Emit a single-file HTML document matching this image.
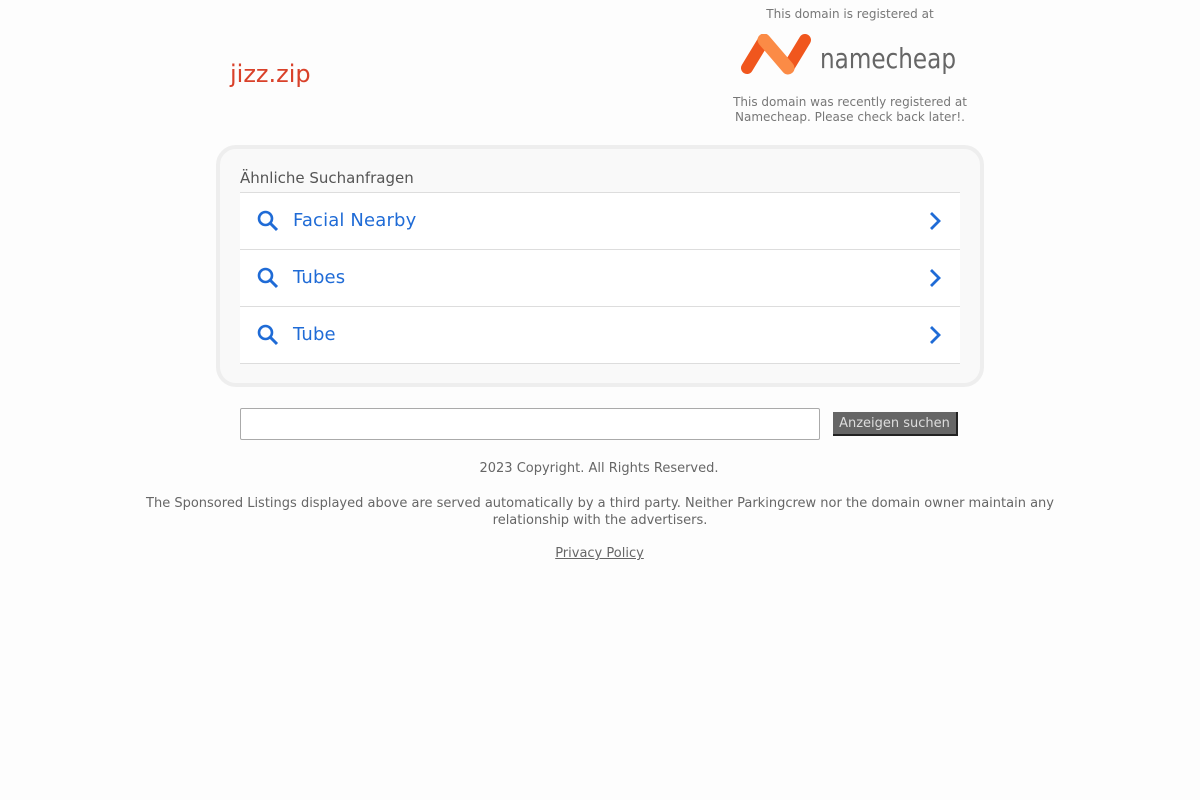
<!DOCTYPE html><html><head><style>
body{margin:0;background:#fdfdfd;font-family:"DejaVu Sans","Liberation Sans",sans-serif;color:#666}
.a{position:absolute}
.row{position:absolute;left:240px;width:720px;height:56px;background:#fff;border-bottom:1px solid #ddd}
.row span{position:absolute;left:53px;top:17px;font-size:18px;color:#1f6bd6;letter-spacing:0.15px}
.row svg.s{position:absolute;left:16px;top:16px}
.row svg.c{position:absolute;left:684px;top:17px}
</style></head><body>
<div class="a" style="left:720px;width:260px;top:7px;text-align:center;font-size:12px;color:#777">This domain is registered at</div>
<div class="a" style="left:230px;top:60px;font-size:24px;color:#d9412a">jizz.zip</div>
<svg class="a" style="left:740px;top:34px" width="220" height="42" viewBox="0 0 220 42">
<path d="M7 34 L24 6" stroke="#f0561d" stroke-width="12" stroke-linecap="round"/>
<path d="M48 34 L65 6" stroke="#f0561d" stroke-width="12" stroke-linecap="round"/>
<path d="M24 6 L48 34" stroke="#fb8b46" stroke-width="13" stroke-linecap="round"/>
<text x="80" y="34" font-family="DejaVu Sans,sans-serif" font-size="28" fill="#666" textLength="136" lengthAdjust="spacingAndGlyphs">namecheap</text>
</svg>
<div class="a" style="left:720px;width:260px;top:95px;text-align:center;font-size:12px;line-height:15px;color:#777">This domain was recently registered at Namecheap. Please check back later!.</div>
<div class="a" style="left:216px;top:145px;width:760px;height:234px;border:4px solid #eee;border-radius:20px;background:#f9f9f9"></div>
<div class="a" style="left:240px;top:169px;font-size:15px;color:#555">Ähnliche Suchanfragen</div>
<div class="a" style="left:240px;top:192px;width:720px;border-top:1px solid #ddd"></div>
<div class="row" style="top:193px"><svg class="s" width="24" height="24" viewBox="0 0 24 24"><circle cx="9.5" cy="9.5" r="6.5" fill="none" stroke="#1f6bd6" stroke-width="2.6"/><path d="M14.5 14.5 L21 21" stroke="#1f6bd6" stroke-width="3"/></svg><span>Facial Nearby</span><svg class="c" width="22" height="22" viewBox="0 0 22 22"><path d="M7 3 L15 11 L7 19" fill="none" stroke="#1f6bd6" stroke-width="2.8"/></svg></div>
<div class="row" style="top:250px"><svg class="s" width="24" height="24" viewBox="0 0 24 24"><circle cx="9.5" cy="9.5" r="6.5" fill="none" stroke="#1f6bd6" stroke-width="2.6"/><path d="M14.5 14.5 L21 21" stroke="#1f6bd6" stroke-width="3"/></svg><span>Tubes</span><svg class="c" width="22" height="22" viewBox="0 0 22 22"><path d="M7 3 L15 11 L7 19" fill="none" stroke="#1f6bd6" stroke-width="2.8"/></svg></div>
<div class="row" style="top:307px"><svg class="s" width="24" height="24" viewBox="0 0 24 24"><circle cx="9.5" cy="9.5" r="6.5" fill="none" stroke="#1f6bd6" stroke-width="2.6"/><path d="M14.5 14.5 L21 21" stroke="#1f6bd6" stroke-width="3"/></svg><span>Tube</span><svg class="c" width="22" height="22" viewBox="0 0 22 22"><path d="M7 3 L15 11 L7 19" fill="none" stroke="#1f6bd6" stroke-width="2.8"/></svg></div>
<div class="a" style="left:240px;top:408px;width:578px;height:30px;border:1px solid #aaa;border-radius:2px;background:#fff"></div>
<div class="a" style="left:833px;top:412px;width:123px;height:22px;background:#666;border-right:2px solid #222;border-bottom:2px solid #222;color:#ddd;font-size:13px;line-height:24px;text-align:center">Anzeigen suchen</div>
<div class="a" style="left:0;width:1198px;top:461px;text-align:center;font-size:13px">2023 Copyright. All Rights Reserved.</div>
<div class="a" style="left:140px;width:920px;top:495px;text-align:center;font-size:13px;line-height:17px">The Sponsored Listings displayed above are served automatically by a third party. Neither Parkingcrew nor the domain owner maintain any relationship with the advertisers.</div>
<div class="a" style="left:0;width:1199px;top:546px;text-align:center;font-size:13px;text-decoration:underline">Privacy Policy</div>
</body></html>
